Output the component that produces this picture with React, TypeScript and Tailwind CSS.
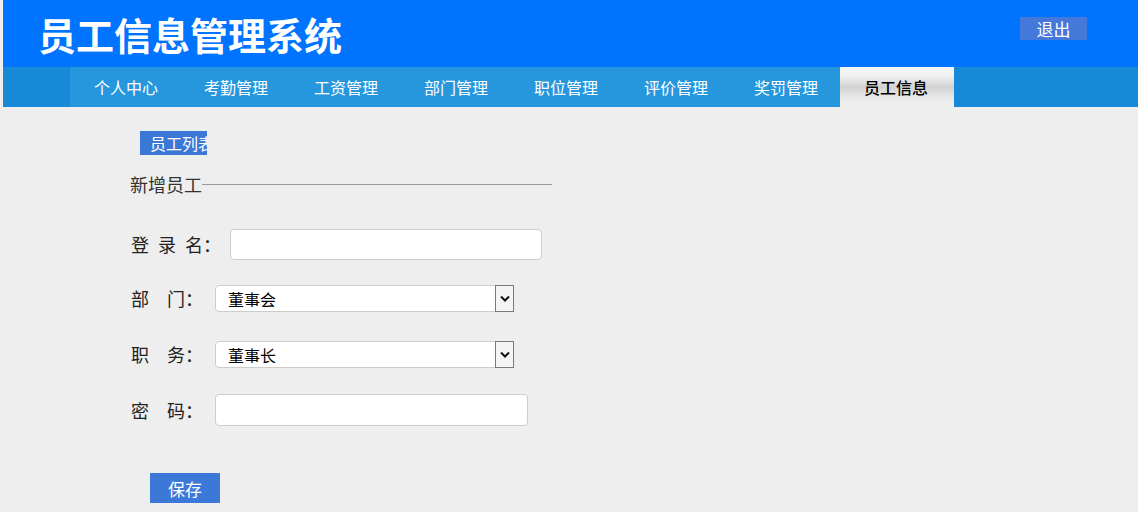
import { useState } from "react";

const NAV = ["个人中心", "考勤管理", "工资管理", "部门管理", "职位管理", "评价管理", "奖罚管理"];

const DEPTS = ["董事会", "人事部", "财务部", "技术部", "市场部"];
const POSTS = ["董事长", "总经理", "部门经理", "职员"];

const FONT = "font-['Noto_Sans_CJK_SC','Noto_Sans',sans-serif]";

export default function App() {
  const [dept, setDept] = useState(DEPTS[0]);
  const [post, setPost] = useState(POSTS[0]);

  return (
    <div className={`min-h-screen w-[1138px] bg-[#eeeeee] ${FONT}`}>
      {/* header */}
      <header className="ml-[3px] flex h-[67px] items-start bg-[#0073ff]">
        <h1 className="ml-[35px] mt-[15px] text-[38px] font-bold leading-none tracking-[0px] text-white">
          员工信息管理系统
        </h1>
        <button className="ml-auto mr-[51px] mt-[17px] flex h-[23px] w-[67px] items-center justify-center bg-[#4479da] text-[17px] leading-none text-white">
          退出
        </button>
      </header>

      {/* nav */}
      <nav className="ml-[3px] flex h-[40px] bg-[#1789d6] pl-[67px]">
        <ul className="flex bg-[#2697dd]">
          {NAV.map((n) => (
            <li
              key={n}
              className="flex w-[110px] items-center pl-[24px] text-[16px] text-white"
            >
              {n}
            </li>
          ))}
        </ul>
        <div className="flex w-[114px] items-center bg-[linear-gradient(180deg,#f6f6f6_0%,#eeeeee_25%,#d2d2d2_50%,#e6e6e6_72%,#f1f1f1_100%)] pl-[24px] text-[16px] font-medium text-black">
          员工信息
        </div>
      </nav>

      {/* content */}
      <main className="pl-[130px] pt-[24px]">
        {/* the label is cut at the button edge in the original too */}
        <button className="ml-[10px] h-[24px] w-[67px] overflow-hidden whitespace-nowrap bg-[#3b78d6] pl-[10px] text-left text-[16px] leading-[24px] text-white">
          员工列表
        </button>

        <div className="mt-[20px] flex w-[422px] items-center">
          <span className="text-[18px] leading-none text-[#333]">新增员工</span>
          <div className="h-px flex-1 bg-[#9a9a9a]" />
        </div>

        <div className="mt-[36px] flex items-center">
          <label className="w-[100px] pl-[1px] text-[18px] text-[#222]">
            登{"\u2002"}录{"\u2002"}名：
          </label>
          <input
            type="text"
            className="h-[31px] w-[312px] rounded-[4px] border border-[#cccccc] bg-white px-2 text-[16px] outline-none"
          />
        </div>

        <div className="mt-[25px] flex items-center">
          <label className="w-[85px] pl-[1px] text-[18px] text-[#222]">
            部{"\u2003"}门：
          </label>
          <Picker value={dept} onChange={setDept} options={DEPTS} />
        </div>

        <div className="mt-[29px] flex items-center">
          <label className="w-[85px] pl-[1px] text-[18px] text-[#222]">
            职{"\u2003"}务：
          </label>
          <Picker value={post} onChange={setPost} options={POSTS} />
        </div>

        <div className="mt-[26px] flex items-center">
          <label className="w-[85px] pl-[1px] text-[18px] text-[#222]">
            密{"\u2003"}码：
          </label>
          <input
            type="password"
            className="h-[32px] w-[313px] rounded-[4px] border border-[#cccccc] bg-white px-2 text-[16px] outline-none"
          />
        </div>

        <button className="ml-[20px] mt-[47px] h-[30px] w-[70px] bg-[#3b78d8] text-[17px] leading-none text-white">
          保存
        </button>
      </main>
    </div>
  );
}

function Picker({
  value,
  onChange,
  options,
}: {
  value: string;
  onChange: (v: string) => void;
  options: string[];
}) {
  return (
    <div className="relative h-[27px] w-[299px]">
      <select
        value={value}
        onChange={(e) => onChange(e.target.value)}
        className="h-full w-full appearance-none rounded-[4px] border border-[#cccccc] bg-white pl-[12px] text-[16px] leading-none text-black outline-none"
      >
        {options.map((o) => (
          <option key={o} value={o}>
            {o}
          </option>
        ))}
      </select>
      {/* windows-style drop button */}
      <div className="pointer-events-none absolute right-0 top-0 flex h-[27px] w-[19px] items-center justify-center border border-[#7a7a7a] bg-[#f4f4f4]">
        <svg width="10" height="7" viewBox="0 0 10 7">
          <path d="M1 1.5 5 5.5 9 1.5" fill="none" stroke="#111" strokeWidth="2" />
        </svg>
      </div>
    </div>
  );
}
